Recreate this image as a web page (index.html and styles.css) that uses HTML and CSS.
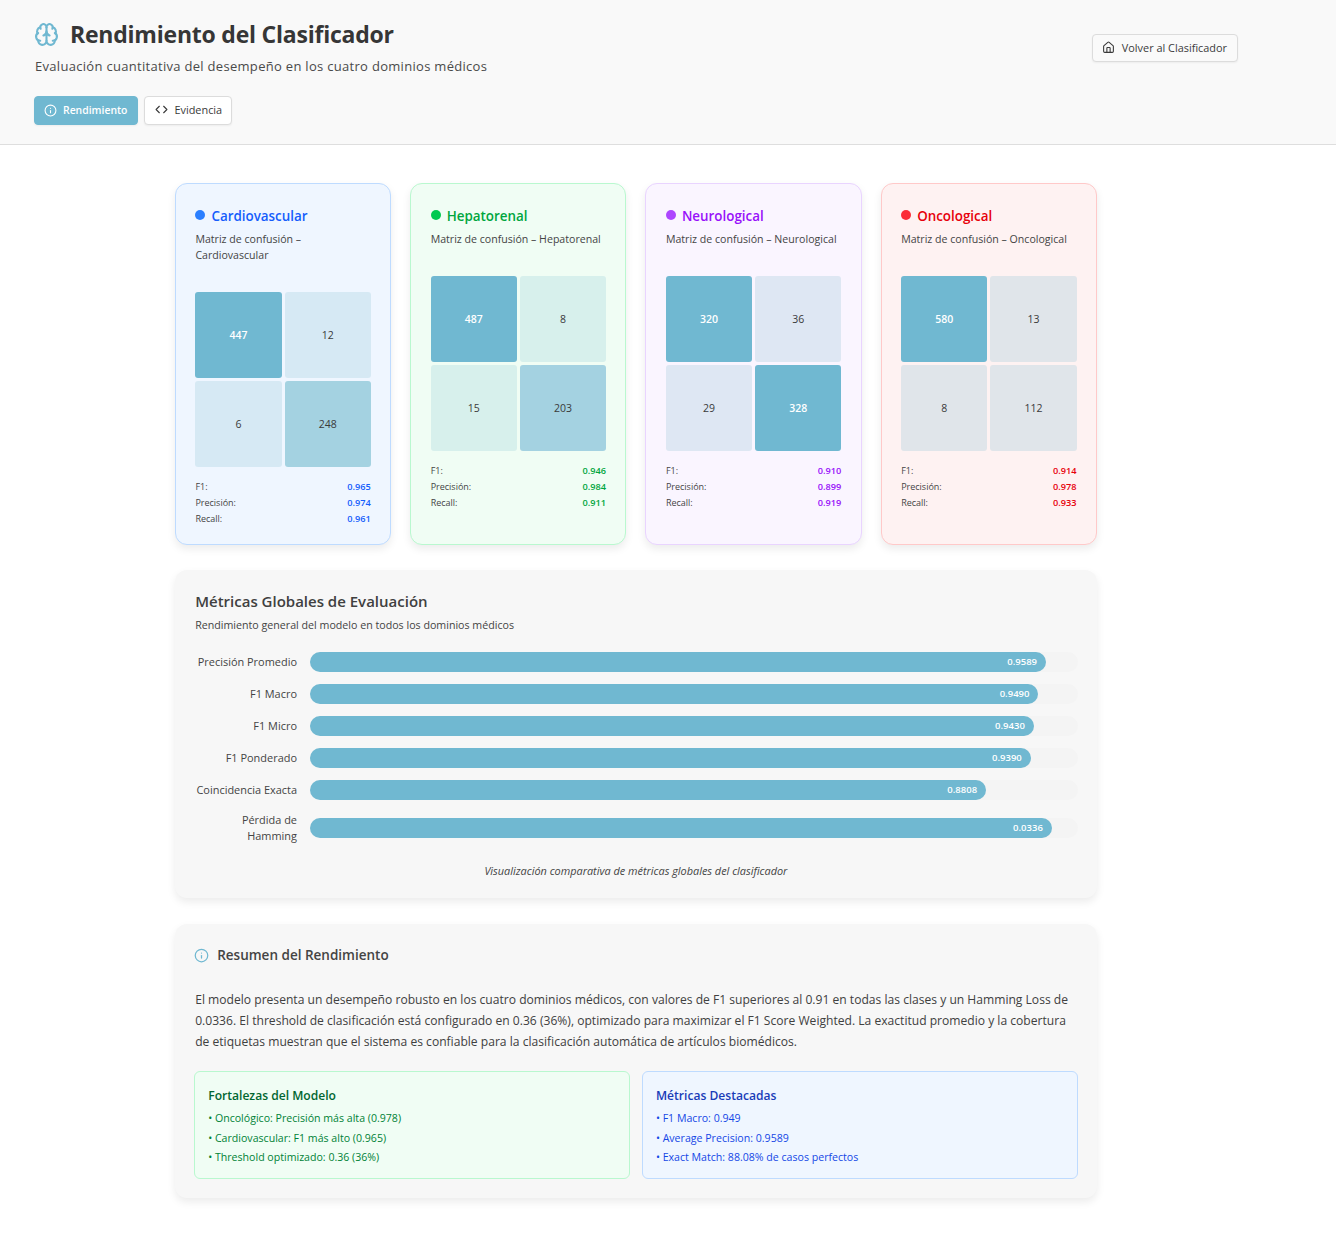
FILE: index.html
```html
<!DOCTYPE html>
<html lang="es">
  <head>
    <meta charset="UTF-8" />
    <meta name="viewport" content="width=device-width, initial-scale=1.0" />
    <title>Rendimiento del Clasificador</title>
    <link rel="stylesheet" href="styles.css">
  </head>
  <body>
    <header class="page-header">
      <div class="header-left">
        <h1 class="page-title">
          <svg class="brain-icon" viewBox="0 0 24 24"><path d="M12 18V5"/><path d="M15 13a4.17 4.17 0 0 1-3-4 4.17 4.17 0 0 1-3 4"/><path d="M17.598 6.5A3 3 0 1 0 12 5a3 3 0 1 0-5.598 1.5"/><path d="M17.997 5.125a4 4 0 0 1 2.526 5.77"/><path d="M18 18a4 4 0 0 0 2-7.464"/><path d="M19.967 17.483A4 4 0 1 1 12 18a4 4 0 1 1-7.967-.517"/><path d="M6 18a4 4 0 0 1-2-7.464"/><path d="M6.003 5.125a4 4 0 0 0-2.526 5.77"/></svg>
          Rendimiento del Clasificador
        </h1>
        <p class="page-subtitle">Evaluación cuantitativa del desempeño en los cuatro dominios médicos</p>
        <nav class="tabs">
          <a class="btn btn-active">
            <svg class="btn-icon" viewBox="0 0 24 24"><circle cx="12" cy="12" r="10"/><path d="M12 16v-4"/><path d="M12 8h.01"/></svg>
            Rendimiento
          </a>
          <a class="btn btn-tab">
            <svg class="btn-icon" viewBox="0 0 24 24"><path d="m16 18 6-6-6-6"/><path d="m8 6-6 6 6 6"/></svg>
            Evidencia
          </a>
        </nav>
      </div>
      <a class="btn btn-back">
        <svg class="btn-icon" viewBox="0 0 24 24"><path d="M15 21v-8a1 1 0 0 0-1-1h-4a1 1 0 0 0-1 1v8"/><path d="M3 10a2 2 0 0 1 .709-1.528l7-5.999a2 2 0 0 1 2.582 0l7 5.999A2 2 0 0 1 21 10v9a2 2 0 0 1-2 2H5a2 2 0 0 1-2-2z"/></svg>
        Volver al Clasificador
      </a>
    </header>

    <main class="content">
      <section class="domain-grid">
        <article class="domain-card card-blue">
          <h2 class="domain-title"><span class="dot"></span>Cardiovascular</h2>
          <p class="domain-caption">Matriz de confusión – Cardiovascular</p>
          <div class="matrix">
            <div class="cell cell-main">447</div>
            <div class="cell cell-soft-blue">12</div>
            <div class="cell cell-soft-blue">6</div>
            <div class="cell cell-mid">248</div>
          </div>
          <dl class="scores">
            <div class="score"><dt>F1:</dt><dd>0.965</dd></div>
            <div class="score"><dt>Precisión:</dt><dd>0.974</dd></div>
            <div class="score"><dt>Recall:</dt><dd>0.961</dd></div>
          </dl>
        </article>

        <article class="domain-card card-green">
          <h2 class="domain-title"><span class="dot"></span>Hepatorenal</h2>
          <p class="domain-caption">Matriz de confusión – Hepatorenal</p>
          <div class="matrix">
            <div class="cell cell-main">487</div>
            <div class="cell cell-soft-green">8</div>
            <div class="cell cell-soft-green">15</div>
            <div class="cell cell-mid">203</div>
          </div>
          <dl class="scores">
            <div class="score"><dt>F1:</dt><dd>0.946</dd></div>
            <div class="score"><dt>Precisión:</dt><dd>0.984</dd></div>
            <div class="score"><dt>Recall:</dt><dd>0.911</dd></div>
          </dl>
        </article>

        <article class="domain-card card-purple">
          <h2 class="domain-title"><span class="dot"></span>Neurological</h2>
          <p class="domain-caption">Matriz de confusión – Neurological</p>
          <div class="matrix">
            <div class="cell cell-main">320</div>
            <div class="cell cell-soft-purple">36</div>
            <div class="cell cell-soft-purple">29</div>
            <div class="cell cell-main">328</div>
          </div>
          <dl class="scores">
            <div class="score"><dt>F1:</dt><dd>0.910</dd></div>
            <div class="score"><dt>Precisión:</dt><dd>0.899</dd></div>
            <div class="score"><dt>Recall:</dt><dd>0.919</dd></div>
          </dl>
        </article>

        <article class="domain-card card-red">
          <h2 class="domain-title"><span class="dot"></span>Oncological</h2>
          <p class="domain-caption">Matriz de confusión – Oncological</p>
          <div class="matrix">
            <div class="cell cell-main">580</div>
            <div class="cell cell-soft-red">13</div>
            <div class="cell cell-soft-red">8</div>
            <div class="cell cell-soft-red">112</div>
          </div>
          <dl class="scores">
            <div class="score"><dt>F1:</dt><dd>0.914</dd></div>
            <div class="score"><dt>Precisión:</dt><dd>0.978</dd></div>
            <div class="score"><dt>Recall:</dt><dd>0.933</dd></div>
          </dl>
        </article>
      </section>

      <section class="panel metrics-panel">
        <h2 class="panel-title">Métricas Globales de Evaluación</h2>
        <p class="panel-subtitle">Rendimiento general del modelo en todos los dominios médicos</p>
        <div class="bars">
          <div class="bar-row">
            <span class="bar-label">Precisión Promedio</span>
            <div class="bar-track"><div class="bar-fill" style="width: 95.89%">0.9589</div></div>
          </div>
          <div class="bar-row">
            <span class="bar-label">F1 Macro</span>
            <div class="bar-track"><div class="bar-fill" style="width: 94.9%">0.9490</div></div>
          </div>
          <div class="bar-row">
            <span class="bar-label">F1 Micro</span>
            <div class="bar-track"><div class="bar-fill" style="width: 94.3%">0.9430</div></div>
          </div>
          <div class="bar-row">
            <span class="bar-label">F1 Ponderado</span>
            <div class="bar-track"><div class="bar-fill" style="width: 93.9%">0.9390</div></div>
          </div>
          <div class="bar-row">
            <span class="bar-label">Coincidencia Exacta</span>
            <div class="bar-track"><div class="bar-fill" style="width: 88.08%">0.8808</div></div>
          </div>
          <div class="bar-row">
            <span class="bar-label">Pérdida de Hamming</span>
            <div class="bar-track"><div class="bar-fill" style="width: 96.64%">0.0336</div></div>
          </div>
        </div>
        <p class="bars-note">Visualización comparativa de métricas globales del clasificador</p>
      </section>

      <section class="panel summary-panel">
        <h2 class="summary-title">
          <svg class="summary-icon" viewBox="0 0 24 24"><circle cx="12" cy="12" r="10"/><path d="M12 16v-4"/><path d="M12 8h.01"/></svg>
          Resumen del Rendimiento
        </h2>
        <p class="summary-text">El modelo presenta un desempeño robusto en los cuatro dominios médicos, con valores de F1 superiores al 0.91 en todas las clases y un Hamming Loss de 0.0336. El threshold de clasificación está configurado en 0.36 (36%), optimizado para maximizar el F1 Score Weighted. La exactitud promedio y la cobertura de etiquetas muestran que el sistema es confiable para la clasificación automática de artículos biomédicos.</p>
        <div class="summary-boxes">
          <div class="note-box note-green">
            <h3>Fortalezas del Modelo</h3>
            <ul>
              <li>• Oncológico: Precisión más alta (0.978)</li>
              <li>• Cardiovascular: F1 más alto (0.965)</li>
              <li>• Threshold optimizado: 0.36 (36%)</li>
            </ul>
          </div>
          <div class="note-box note-blue">
            <h3>Métricas Destacadas</h3>
            <ul>
              <li>• F1 Macro: 0.949</li>
              <li>• Average Precision: 0.9589</li>
              <li>• Exact Match: 88.08% de casos perfectos</li>
            </ul>
          </div>
        </div>
      </section>
    </main>
  </body>
</html>
```

FILE: styles.css
```css
* {
  box-sizing: border-box;
}
body {
  margin: 0;
  background-color: #ffffff;
  color: #3a3a3a;
  font-family: "Open Sans", "Noto Sans", sans-serif;
}
h1, h2, h3, p, ul, dl, dd {
  margin: 0;
  padding: 0;
}
svg {
  fill: none;
  stroke: currentColor;
  stroke-width: 2;
  stroke-linecap: round;
  stroke-linejoin: round;
  flex-shrink: 0;
}

/* header */
.page-header {
  display: flex;
  justify-content: space-between;
  align-items: flex-start;
  height: 145px;
  padding: 19px 98px 0 34px;
  background-color: #f9f9f9;
  border-bottom: 1px solid #dedede;
}
.page-title {
  display: flex;
  align-items: center;
  gap: 11px;
  height: 30px;
  font-size: 23px;
  font-weight: 700;
  letter-spacing: -0.22px;
  color: #363636;
}
.brain-icon {
  width: 25px;
  height: 25px;
  color: #70b8d1;
}
.page-subtitle {
  margin-top: 7px;
  padding-left: 1px;
  font-size: 13px;
  line-height: 20px;
  letter-spacing: 0.3px;
  color: #4a4a4a;
}
.tabs {
  display: flex;
  gap: 6px;
  margin-top: 20px;
}
.btn {
  display: flex;
  align-items: center;
  gap: 6px;
  height: 29px;
  padding: 0 10px 1px 9px;
  font-size: 10.9px;
  font-weight: 500;
  color: #3a3a3a;
  background-color: #ffffff;
  border: 1px solid #dcdcdc;
  border-radius: 4px;
  box-shadow: 0 1px 2px rgba(0, 0, 0, 0.05);
}
.btn-active {
  color: #ffffff;
  font-size: 10.4px;
  font-weight: 600;
  background-color: #70b8d1;
  border-color: #70b8d1;
}
.btn-tab {
  padding: 0 9px 2px 10px;
}
.btn-back {
  gap: 7px;
  height: 28px;
  margin-top: 15px;
  background-color: #fafafa;
}
.btn-icon {
  width: 13px;
  height: 13px;
}

/* main column */
.content {
  display: flex;
  flex-direction: column;
  width: 921.8px;
  margin-left: 175px;
  padding: 38px 0 39px;
}

/* domain cards */
.domain-grid {
  display: grid;
  grid-template-columns: repeat(4, 1fr);
  gap: 19.2px;
}
.domain-card {
  display: flex;
  flex-direction: column;
  padding: 19.2px 19.2px 0 19.4px;
  height: 362px;
  border: 1px solid;
  border-radius: 12px;
  box-shadow: 0 4px 8px rgba(0, 0, 0, 0.08);
}
.domain-title {
  display: flex;
  align-items: center;
  gap: 6px;
  height: 26px;
  font-size: 13.4px;
  font-weight: 600;
}
.dot {
  width: 10px;
  height: 10px;
  margin-top: -2px;
  border-radius: 50%;
}
.domain-caption {
  margin-top: 2px;
  font-size: 10.6px;
  line-height: 16px;
  color: #444444;
}
.matrix {
  display: grid;
  grid-template-columns: 1fr 1fr;
  grid-auto-rows: 86px;
  gap: 3px;
  margin-top: 29px;
}
.cell {
  display: flex;
  align-items: center;
  justify-content: center;
  border-radius: 3px;
  font-size: 10.5px;
  color: #3a3a3a;
}
.cell-main {
  background-color: #70b8d1;
  color: #ffffff;
  font-weight: 600;
}
.cell-mid {
  background-color: #a4d2e1;
}
.cell-soft-blue {
  background-color: #d6e9f4;
}
.cell-soft-green {
  background-color: #d7f0ec;
}
.cell-soft-purple {
  background-color: #dee7f3;
}
.cell-soft-red {
  background-color: #e0e5ea;
}
.scores {
  margin-top: 12px;
  font-size: 9px;
  line-height: 16px;
}
.score {
  display: flex;
  justify-content: space-between;
}
.score dt {
  color: #444444;
}
.score dd {
  font-size: 9.2px;
  font-weight: 600;
}

.card-blue {
  background-color: #eff6ff;
  border-color: #bedbff;
}
.card-blue .dot {
  background-color: #2b7fff;
}
.card-blue .domain-title, .card-blue dd {
  color: #155dfc;
}
.card-green {
  background-color: #f0fdf4;
  border-color: #b9f8cf;
}
.card-green .dot {
  background-color: #00c950;
}
.card-green .domain-title, .card-green dd {
  color: #00a63e;
}
.card-purple {
  background-color: #faf5ff;
  border-color: #e9d4ff;
}
.card-purple .dot {
  background-color: #ad46ff;
}
.card-purple .domain-title, .card-purple dd {
  color: #9810fa;
}
.card-red {
  background-color: #fef2f2;
  border-color: #ffc9c9;
}
.card-red .dot {
  background-color: #fb2c36;
}
.card-red .domain-title, .card-red dd {
  color: #e7000b;
}

/* panels */
.panel {
  background-color: #f7f7f7;
  border-radius: 12px;
  box-shadow: 0 4px 8px rgba(0, 0, 0, 0.08);
}
.metrics-panel {
  height: 328px;
  margin-top: 25px;
  padding: 20px 19.2px 0;
}
.panel-title {
  padding-left: 1px;
  font-size: 15px;
  font-weight: 600;
  line-height: 22px;
  color: #404040;
}
.panel-subtitle {
  margin-top: 5px;
  padding-left: 1px;
  font-size: 10.67px;
  line-height: 16px;
  color: #444444;
}
.bars {
  display: flex;
  flex-direction: column;
  gap: 12px;
  margin-top: 19px;
}
.bar-row {
  display: flex;
  align-items: center;
  gap: 13px;
}
.bar-label {
  width: 102.8px;
  flex-shrink: 0;
  text-align: right;
  font-size: 10.95px;
  line-height: 16px;
  color: #444444;
}
.bar-track {
  flex: 1;
  height: 20px;
  background-color: #f4f4f4;
  border-radius: 10px;
}
.bar-fill {
  height: 20px;
  padding-right: 9px;
  text-align: right;
  font-size: 9.5px;
  font-weight: 600;
  line-height: 20px;
  color: #ffffff;
  background-color: #70b8d1;
  border-radius: 10px;
}
.bars-note {
  margin-top: 19px;
  text-align: center;
  font-size: 10.9px;
  font-style: italic;
  line-height: 16px;
  color: #444444;
}
.summary-panel {
  height: 274px;
  margin-top: 26px;
  padding: 20px 19.2px 0;
}
.summary-title {
  display: flex;
  align-items: center;
  gap: 8px;
  height: 22px;
  font-size: 13.5px;
  font-weight: 600;
  color: #444444;
}
.summary-icon {
  width: 15px;
  height: 15px;
  color: #70b8d1;
}
.summary-text {
  margin-top: 23px;
  padding-left: 1px;
  font-size: 12.1px;
  line-height: 21px;
  color: #404040;
}
.summary-boxes {
  display: grid;
  grid-template-columns: 1fr 1fr;
  gap: 12px;
  margin-top: 19px;
}
.note-box {
  height: 108px;
  padding: 14px 13px 0;
  border: 1px solid;
  border-radius: 6px;
}
.note-box h3 {
  font-size: 12.1px;
  font-weight: 600;
  line-height: 20px;
}
.note-box ul {
  margin-top: 3px;
  list-style: none;
  font-size: 10.6px;
  line-height: 19.5px;
}
.note-green {
  background-color: #f0fdf4;
  border-color: #b9f8cf;
}
.note-green h3 {
  color: #016630;
}
.note-green ul {
  color: #008236;
}
.note-blue {
  background-color: #eff6ff;
  border-color: #bedbff;
}
.note-blue h3 {
  color: #193cb8;
}
.note-blue ul {
  color: #1447e6;
}
```
